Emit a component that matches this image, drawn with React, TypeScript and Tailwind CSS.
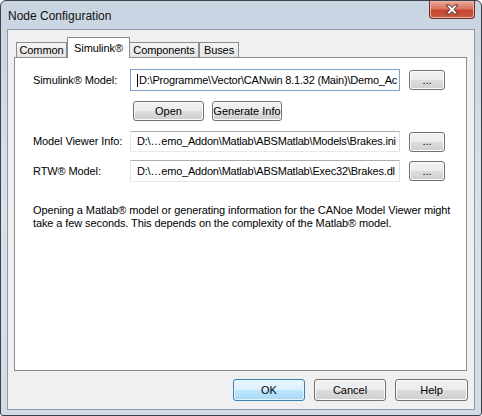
import React from "react";

const font = { fontFamily: '"Liberation Sans", Arial, sans-serif' };

function Btn({ children, className = "", primary = false }: { children: React.ReactNode; className?: string; primary?: boolean }) {
  return (
    <div
      className={
        "flex items-center justify-center rounded-[3px] border text-[11px] text-black " +
        (primary
          ? "border-[#3c7fb1] bg-[linear-gradient(to_bottom,#eaf6fd_0%,#d9f0fc_50%,#bee6fd_50%,#a7d9f5_100%)] shadow-[inset_0_0_0_1px_#e5f4fc] "
          : "border-[#707070] bg-[linear-gradient(to_bottom,#f2f2f2_0%,#ebebeb_50%,#dddddd_50%,#cfcfcf_100%)] shadow-[inset_0_0_0_1px_#fcfcfc] ") +
        className
      }
    >
      {children}
    </div>
  );
}

function Field({ value, focused = false, h }: { value: string; focused?: boolean; h: string }) {
  return (
    <div
      className={
        "w-[270px] flex items-center overflow-hidden whitespace-nowrap bg-white pl-[6px] text-[11px] tracking-[-0.2px] text-black border " +
        (focused ? "border-[#7da2ce] " : "border-[#abadb3] border-l-[#e2e3ea] border-r-[#dbdfe6] border-b-[#e3e9ef] ") +
        h
      }
    >
      {focused && <span className="mr-[1px] inline-block h-[13px] w-px bg-black" />}
      {value}
    </div>
  );
}

function Row({ label, value, focused, h }: { label: string; value: string; focused?: boolean; h: string }) {
  return (
    <div className="flex items-center">
      <div className="w-[97px] text-[11px] tracking-[-0.1px] text-black">{label}</div>
      <Field value={value} focused={focused} h={h} />
      <Btn className="ml-[9px] h-[20px] w-[36px] text-[#2a1f8a]">...</Btn>
    </div>
  );
}

export default function App() {
  return (
    <div className="h-[416px] w-[482px] bg-white" style={font}>
      <div className="flex h-[416px] w-[482px] flex-col rounded-t-[6px] rounded-b-[3px] border border-[#3d4148] bg-gradient-to-b from-[#c9d4e2] via-[#d9e1eb] to-[#d3dbe6] px-[6px] pb-[5px]">
        <div className="flex h-[28px] items-start justify-between">
          <div className="pl-[1px] pt-[8px] text-[12px] leading-[14px] text-[#111]">Node Configuration</div>
          <div className="flex h-[18px] w-[46px] items-center justify-center rounded-b-[4px] border border-t-0 border-[#6b2e24] bg-[linear-gradient(to_bottom,#e9a898_0%,#d9755f_45%,#c6452e_55%,#c85a3e_100%)] shadow-[inset_0_0_0_1px_#eab3a6]">
            <svg width="14" height="11" viewBox="0 0 14 11">
              <path
                d="M1 1 H4.5 L7 3.6 L9.5 1 H13 L9 5.5 L13 10 H9.5 L7 7.4 L4.5 10 H1 L5 5.5 Z"
                fill="#fff"
                stroke="#4a2a24"
                strokeWidth="1"
                strokeLinejoin="round"
              />
            </svg>
          </div>
        </div>
        <div className="flex flex-1 flex-col border border-[#8d97a6] bg-[#f0f0f0] pb-[8px]">
          <div className="mt-[7px] flex h-[20px] items-end pl-[8px] text-[11px] tracking-[-0.1px] text-black">
            <div className="flex h-[15px] w-[51px] items-center justify-center border border-b-0 border-[#898c95] bg-gradient-to-b from-[#f4f4f4] to-[#e4e4e4]">
              Common
            </div>
            <div className="relative z-10 -mb-px flex h-[21px] w-[63px] items-start justify-center border border-b-0 border-[#898c95] bg-white pt-[2px]">
              Simulink®
            </div>
            <div className="flex h-[15px] w-[69px] items-center justify-center border border-b-0 border-l-0 border-[#898c95] bg-gradient-to-b from-[#f4f4f4] to-[#e4e4e4]">
              Components
            </div>
            <div className="flex h-[15px] w-[40px] items-center justify-center border border-b-0 border-[#898c95] bg-gradient-to-b from-[#f4f4f4] to-[#e4e4e4]">
              Buses
            </div>
          </div>
          <div className="ml-[6px] mr-[7px] flex flex-1 flex-col border border-[#898c95] bg-white pl-[18px] pt-[11px]">
            <Row label="Simulink® Model:" value={"D:\\Programme\\Vector\\CANwin 8.1.32 (Main)\\Demo_Ac"} focused h="h-[22px]" />
            <div className="mt-[10px] flex pl-[100px]">
              <Btn className="h-[20px] w-[71px]">Open</Btn>
              <Btn className="ml-[8px] h-[20px] w-[70px]">Generate Info</Btn>
            </div>
            <div className="mt-[10px]">
              <Row label="Model Viewer Info:" value={"D:\\…emo_Addon\\Matlab\\ABSMatlab\\Models\\Brakes.ini"} h="h-[21px]" />
            </div>
            <div className="mt-[8px]">
              <Row label="RTW® Model:" value={"D:\\…emo_Addon\\Matlab\\ABSMatlab\\Exec32\\Brakes.dl"} h="h-[22px]" />
            </div>
            <p className="mt-[22px] text-[11px] leading-[13px] tracking-[-0.1px] text-black">
              Opening a Matlab® model or generating information for the CANoe Model Viewer might
              <br />
              take a few seconds. This depends on the complexity of the Matlab® model.
            </p>
          </div>
          <div className="mr-[6px] mt-[8px] flex justify-end gap-[9px]">
            <Btn primary className="h-[22px] w-[72px]">OK</Btn>
            <Btn className="h-[22px] w-[72px]">Cancel</Btn>
            <Btn className="h-[22px] w-[73px]">Help</Btn>
          </div>
        </div>
      </div>
    </div>
  );
}
